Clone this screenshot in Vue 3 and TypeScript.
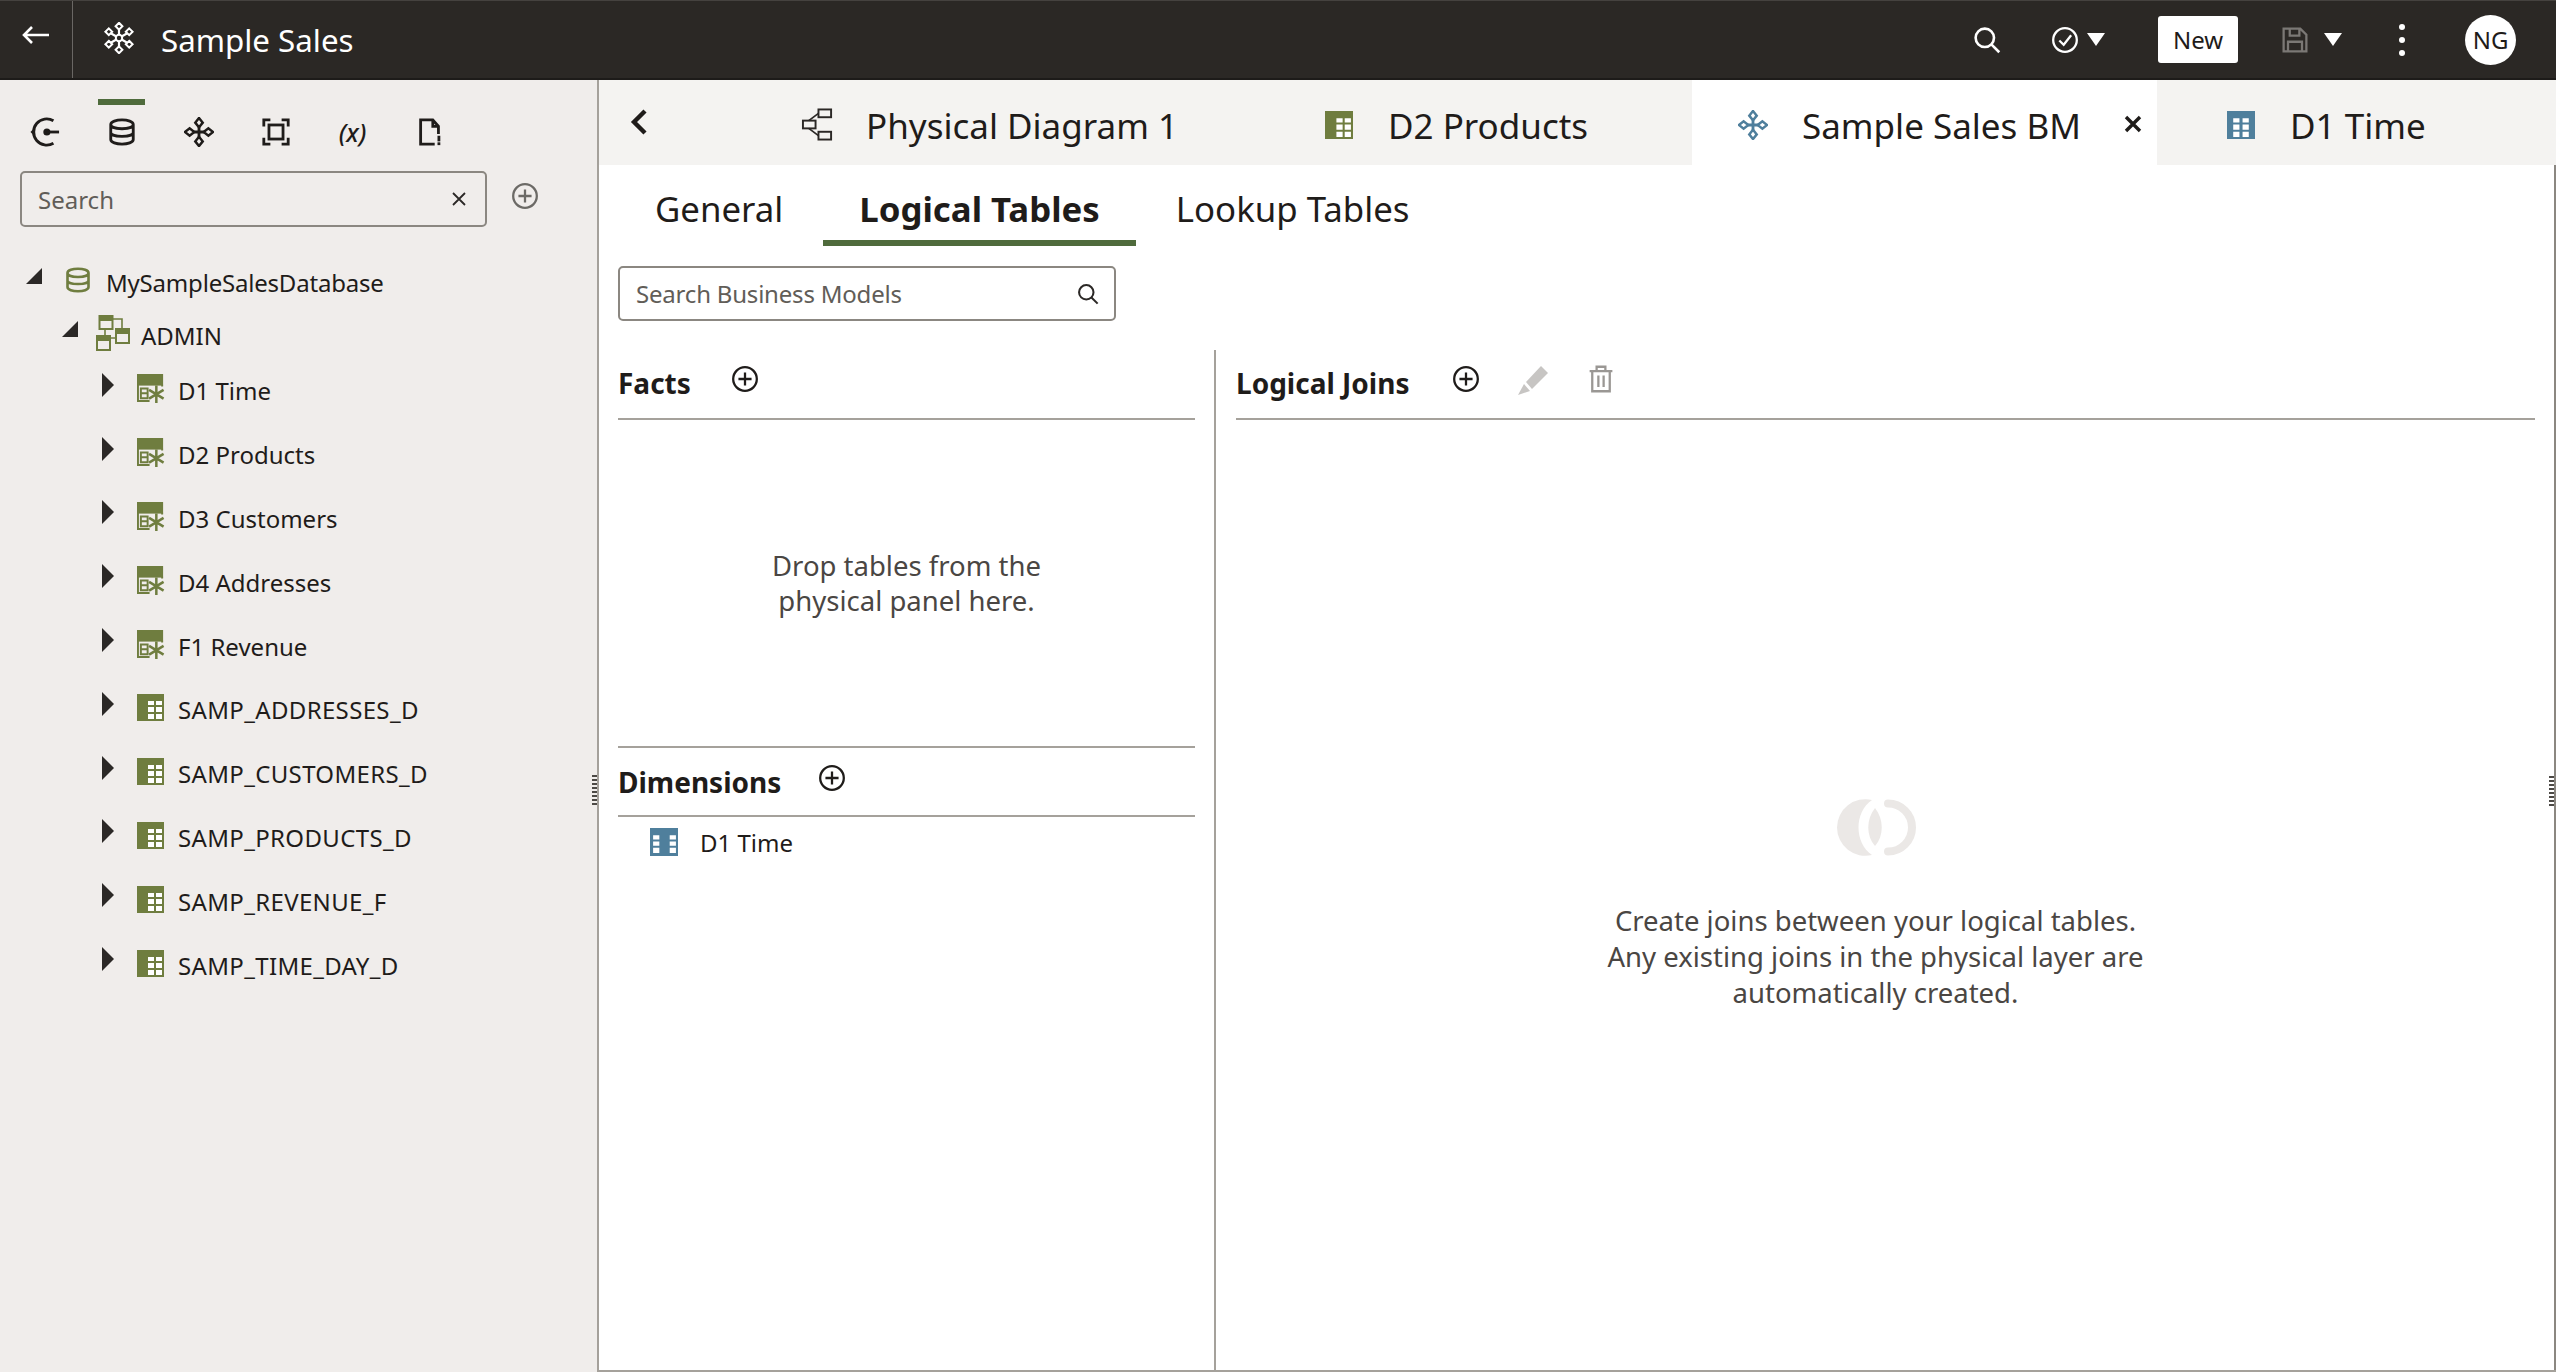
<script setup lang="ts">
interface TreeItem {
  label: string;
  icon: 'star-table' | 'grid-table';
}

interface WorkTab {
  label: string;
  icon: string;
  tone: string;
  active?: boolean;
}

const workTabs: WorkTab[] = [
  { label: 'Physical Diagram 1', icon: 'diagram', tone: 'ink' },
  { label: 'D2 Products', icon: 'grid-table', tone: 'olive' },
  { label: 'Sample Sales BM', icon: 'model', tone: 'blue', active: true },
  { label: 'D1 Time', icon: 'center-table', tone: 'blue' },
];

const railIcons = ['connect', 'database', 'model', 'focus', 'variable', 'file-alert'];

const treeItems: TreeItem[] = [
  { label: 'D1 Time', icon: 'star-table' },
  { label: 'D2 Products', icon: 'star-table' },
  { label: 'D3 Customers', icon: 'star-table' },
  { label: 'D4 Addresses', icon: 'star-table' },
  { label: 'F1 Revenue', icon: 'star-table' },
  { label: 'SAMP_ADDRESSES_D', icon: 'grid-table' },
  { label: 'SAMP_CUSTOMERS_D', icon: 'grid-table' },
  { label: 'SAMP_PRODUCTS_D', icon: 'grid-table' },
  { label: 'SAMP_REVENUE_F', icon: 'grid-table' },
  { label: 'SAMP_TIME_DAY_D', icon: 'grid-table' },
];

const subTabs = ['General', 'Logical Tables', 'Lookup Tables'];
</script>

<template>
  <div class="app">
    <svg class="sprite" aria-hidden="true">
      <symbol id="connect" viewBox="0 0 32 32">
        <path d="M25 4 A14 14 0 1 0 25 28" fill="none" stroke="currentColor" stroke-width="3" />
        <path d="M5.5 11 L0.5 16 L5.5 21 Z" fill="currentColor" />
        <circle cx="18" cy="16" r="3.8" fill="currentColor" />
        <rect x="18" y="14.5" width="13" height="3" fill="currentColor" />
      </symbol>
      <symbol id="database" viewBox="0 0 32 32">
        <path d="M4 8 C4 1.5 28 1.5 28 8 V24 C28 30.5 4 30.5 4 24 Z M4 8 C4 14 28 14 28 8 M4 16.5 C4 22 28 22 28 16.5" fill="none" stroke="currentColor" stroke-width="3" />
      </symbol>
      <symbol id="model" viewBox="0 0 32 32">
        <path d="M16 1 L20 6 L16 11 L12 6 Z M16 21 L20 26 L16 31 L12 26 Z M1 16 L6 12 L11 16 L6 20 Z M21 16 L26 12 L31 16 L26 20 Z" fill="none" stroke="currentColor" stroke-width="2.6" />
        <path d="M16 10 V22 M10 16 H22" stroke="currentColor" stroke-width="3" />
      </symbol>
      <symbol id="focus" viewBox="0 0 32 32">
        <path d="M10 3 H3 V10 M22 3 H29 V10 M10 29 H3 V22 M22 29 H29 V22" fill="none" stroke="currentColor" stroke-width="3" />
        <rect x="8.5" y="8.5" width="15" height="15" fill="none" stroke="currentColor" stroke-width="3" />
      </symbol>
      <symbol id="file-alert" viewBox="0 0 32 32">
        <path d="M21 29 H6 V3 H19 L25 10 V18 M19 3 V10 H25" fill="none" stroke="currentColor" stroke-width="3" />
        <rect x="24" y="20" width="3" height="6" fill="currentColor" />
        <rect x="24" y="27" width="3" height="3" fill="currentColor" />
      </symbol>
      <symbol id="plus-circle" viewBox="0 0 32 32">
        <circle cx="16" cy="16" r="13.5" fill="none" stroke="currentColor" stroke-width="2.6" />
        <path d="M16 8.5 V23.5 M8.5 16 H23.5" stroke="currentColor" stroke-width="2.6" />
      </symbol>
      <symbol id="search" viewBox="0 0 32 32">
        <circle cx="13.5" cy="13.5" r="10.5" fill="none" stroke="currentColor" stroke-width="3" />
        <path d="M21 21 L30 30" stroke="currentColor" stroke-width="3" />
      </symbol>
      <symbol id="snowflake" viewBox="0 0 32 32">
        <path d="M16 6 V26 M7.3 11 L24.7 21 M24.7 11 L7.3 21" stroke="currentColor" stroke-width="2.2" />
        <path d="M16 0.8 L19.4 4.2 L16 7.6 L12.6 4.2 Z M16 24.4 L19.4 27.8 L16 31.2 L12.6 27.8 Z M5.8 6.4 L9.2 9.8 L5.8 13.2 L2.4 9.8 Z M26.2 6.4 L29.6 9.8 L26.2 13.2 L22.8 9.8 Z M5.8 18.8 L9.2 22.2 L5.8 25.6 L2.4 22.2 Z M26.2 18.8 L29.6 22.2 L26.2 25.6 L22.8 22.2 Z" fill="#2b2825" stroke="currentColor" stroke-width="2" />
        <circle cx="16" cy="16" r="3.2" fill="#2b2825" stroke="currentColor" stroke-width="2" />
      </symbol>
      <symbol id="check-circle" viewBox="0 0 32 32">
        <circle cx="16" cy="16" r="13.5" fill="none" stroke="currentColor" stroke-width="2.6" />
        <path d="M9.5 16.5 L14.5 21.5 L23 10.5" fill="none" stroke="currentColor" stroke-width="2.6" />
      </symbol>
      <symbol id="save" viewBox="0 0 32 32">
        <path d="M3 3 H22 L29 10 V29 H3 Z M10 3 V11 H21 V3 M8 29 V18 H24 V29" fill="none" stroke="currentColor" stroke-width="2.6" />
      </symbol>
      <symbol id="diagram" viewBox="0 0 34 34">
        <rect x="18" y="1.5" width="13" height="8" fill="none" stroke="currentColor" stroke-width="2" />
        <rect x="2" y="13" width="13" height="8" fill="none" stroke="currentColor" stroke-width="2" />
        <rect x="18" y="24.5" width="13" height="8" fill="none" stroke="currentColor" stroke-width="2" />
        <path d="M8 13 L18 5.5 M8 21 L18 28.5" fill="none" stroke="currentColor" stroke-width="1.8" />
      </symbol>
      <symbol id="grid-table" viewBox="0 0 27 27">
        <rect width="27" height="27" fill="currentColor" />
        <path d="M11 7 H17 V11 H11 Z M19 7 H25 V11 H19 Z M11 13 H17 V18 H11 Z M19 13 H25 V18 H19 Z M11 20 H17 V25 H11 Z M19 20 H25 V25 H19 Z" fill="#fff" />
      </symbol>
      <symbol id="center-table" viewBox="0 0 27 27">
        <rect width="27" height="27" fill="currentColor" />
        <path d="M6 7 H12 V11 H6 Z M15 7 H21 V11 H15 Z M6 13 H12 V18 H6 Z M15 13 H21 V18 H15 Z M6 20 H12 V25 H6 Z M15 20 H21 V25 H15 Z" fill="#fff" />
      </symbol>
      <symbol id="film-table" viewBox="0 0 27 27">
        <rect width="27" height="27" fill="currentColor" />
        <path d="M3 7 H9 V11 H3 Z M19 7 H25 V11 H19 Z M3 13 H9 V17 H3 Z M19 13 H25 V17 H19 Z M3 19 H9 V24 H3 Z M19 19 H25 V24 H19 Z" fill="#fff" />
      </symbol>
      <symbol id="star-table" viewBox="0 0 30 30">
        <rect x="0" y="0" width="27" height="12" fill="currentColor" />
        <path d="M1 11 V28 H13 M26 11 V13" fill="none" stroke="currentColor" stroke-width="2" />
        <path d="M4 15 H11 V20 H4 Z M4 20 H11 V25 H4 Z" fill="none" stroke="currentColor" stroke-width="2" />
        <path d="M20 12 V30 M12.5 16.5 L27.5 25.5 M27.5 16.5 L12.5 25.5" stroke="currentColor" stroke-width="2.6" />
      </symbol>
      <symbol id="schema" viewBox="0 0 34 36">
        <rect x="3.5" y="1" width="13" height="13" fill="#f0edeb" stroke="currentColor" stroke-width="2" />
        <rect x="3.5" y="1" width="13" height="5" fill="currentColor" />
        <rect x="20" y="14" width="13" height="14" fill="#f0edeb" stroke="currentColor" stroke-width="2" />
        <rect x="20" y="14" width="13" height="5" fill="currentColor" />
        <rect x="1" y="21" width="13" height="14" fill="#f0edeb" stroke="currentColor" stroke-width="2" />
        <rect x="1" y="21" width="13" height="5" fill="currentColor" />
        <path d="M16 4 H26 V14 M14 23 H20 M9 14 V21" fill="none" stroke="currentColor" stroke-width="1.6" />
      </symbol>
      <symbol id="pencil" viewBox="0 0 32 32">
        <path d="M9 19 L24 3 L31 10 L15 26 Z" fill="currentColor" />
        <path d="M7 21 L13 28 L1 32 Z" fill="currentColor" />
      </symbol>
      <symbol id="trash" viewBox="0 0 32 32">
        <path d="M3 7 H29 M11 7 V2 H21 V7 M6 7 V30 H26 V7 M13 12 V25 M19 12 V25" fill="none" stroke="currentColor" stroke-width="2.6" />
      </symbol>
      <symbol id="joins" viewBox="0 0 80 57">
        <path d="M36 1 A28.3 28.3 0 1 0 36 56 C18 44 18 13 36 1 Z" fill="currentColor" />
        <path d="M39 9 C30 20 30 37 39 47 C48 37 48 20 39 9 Z" fill="currentColor" />
        <path d="M52 4.5 A24 24 0 0 1 52 52.5" fill="none" stroke="currentColor" stroke-width="8" stroke-linecap="round" />
      </symbol>
    </svg>

    <header class="topbar">
      <button class="back-btn" type="button" aria-label="Back">
        <svg width="30" height="22" viewBox="0 0 30 22"><path d="M28 11 H3 M11 3 L3 11 L11 19" fill="none" stroke="currentColor" stroke-width="2.6" /></svg>
      </button>
      <div class="brand">
        <svg class="icon-32"><use href="#snowflake" /></svg>
        <span>Sample Sales</span>
      </div>
      <div class="top-actions">
        <svg class="top-search"><use href="#search" /></svg>
        <svg class="top-check"><use href="#check-circle" /></svg>
        <span class="caret"></span>
        <button class="new-btn" type="button">New</button>
        <svg class="top-save"><use href="#save" /></svg>
        <span class="caret"></span>
        <span class="kebab"><i></i><i></i><i></i></span>
        <span class="avatar">NG</span>
      </div>
    </header>

    <div class="body">
      <aside class="sidebar">
        <div class="rail">
          <span v-for="(name, i) in railIcons" :key="name" class="rail-item" :class="{ selected: i === 1 }">
            <span v-if="name === 'variable'" class="rail-var">(x)</span>
            <svg v-else class="rail-icon"><use :href="`#${name}`" /></svg>
          </span>
        </div>
        <div class="side-search">
          <div class="side-input">
            <span>Search</span>
            <svg width="14" height="14" viewBox="0 0 14 14"><path d="M1 1 L13 13 M13 1 L1 13" stroke="#2b2826" stroke-width="1.8" /></svg>
          </div>
          <svg class="side-plus"><use href="#plus-circle" /></svg>
        </div>
        <ul class="tree">
          <li class="node node-root">
            <span class="tri tri-open"></span>
            <svg class="node-db"><use href="#database" /></svg>
            <span class="root-label">MySampleSalesDatabase</span>
          </li>
          <li class="node node-schema">
            <span class="tri tri-open"></span>
            <svg class="node-schema-icon"><use href="#schema" /></svg>
            <span>ADMIN</span>
          </li>
          <li v-for="item in treeItems" :key="item.label" class="node node-leaf">
            <span class="tri tri-closed"></span>
            <svg class="node-table" :class="item.icon"><use :href="`#${item.icon}`" /></svg>
            <span :class="{ 'caps-label': item.icon === 'grid-table' }">{{ item.label }}</span>
          </li>
        </ul>
        <span class="grip"></span>
      </aside>

      <main class="main">
        <nav class="work-tabs">
          <span class="chevron">
            <svg width="20" height="28" viewBox="0 0 20 28"><path d="M16 3 L5 14 L16 25" fill="none" stroke="currentColor" stroke-width="4.4" /></svg>
          </span>
          <div v-for="tab in workTabs" :key="tab.label" class="work-tab" :class="{ active: tab.active }">
            <svg class="tab-icon" :class="[tab.tone, tab.icon]"><use :href="`#${tab.icon}`" /></svg>
            <span>{{ tab.label }}</span>
            <svg v-if="tab.active" class="tab-close" viewBox="0 0 18 18"><path d="M2 2 L16 16 M16 2 L2 16" stroke="currentColor" stroke-width="3.4" /></svg>
          </div>
        </nav>

        <div class="content">
          <div class="sub-tabs">
            <span v-for="(name, i) in subTabs" :key="name" class="sub-tab" :class="{ current: i === 1 }">{{ name }}</span>
          </div>

          <div class="model-search">
            <span>Search Business Models</span>
            <svg class="model-search-icon"><use href="#search" /></svg>
          </div>

          <div class="columns">
            <section class="left-col">
              <div class="col-head">
                <h3>Facts</h3>
                <svg class="head-plus"><use href="#plus-circle" /></svg>
              </div>
              <div class="drop-zone">Drop tables from the<br />physical panel here.</div>
              <div class="col-head col-head-dim">
                <h3>Dimensions</h3>
                <svg class="head-plus"><use href="#plus-circle" /></svg>
              </div>
              <div class="dim-row">
                <svg class="dim-icon"><use href="#film-table" /></svg>
                <span>D1 Time</span>
              </div>
            </section>

            <section class="right-col">
              <div class="col-head col-head-joins">
                <h3>Logical Joins</h3>
                <svg class="head-plus"><use href="#plus-circle" /></svg>
                <svg class="head-tool pencil"><use href="#pencil" /></svg>
                <svg class="head-tool trash"><use href="#trash" /></svg>
              </div>
              <div class="joins-empty">
                <svg class="joins-icon"><use href="#joins" /></svg>
                <p>Create joins between your logical tables.<br />Any existing joins in the physical layer are<br />automatically created.</p>
              </div>
              <span class="grip grip-right"></span>
            </section>
          </div>
        </div>
      </main>
    </div>
  </div>
</template>

<style>
html,
body {
  margin: 0;
  padding: 0;
  background: #fff;
}
</style>

<style scoped>
.app {
  width: 2556px;
  height: 1372px;
  display: flex;
  flex-direction: column;
  overflow: hidden;
  font-family: "Noto Sans", "Open Sans", sans-serif;
  color: #1f1c1a;
  background: #fff;
}

.sprite {
  position: absolute;
  width: 0;
  height: 0;
}

.topbar {
  flex: 0 0 80px;
  box-sizing: border-box;
  display: flex;
  align-items: center;
  background: #2b2825;
  border-top: 1px solid #45423f;
  border-bottom: 2px solid #1d1b19;
  color: #fff;
}

.back-btn {
  width: 73px;
  height: 100%;
  padding: 0 0 6px;
  border: 0;
  border-right: 1px solid #6a6764;
  background: none;
  color: #fff;
}

.brand {
  display: flex;
  align-items: center;
  gap: 26px;
  padding-left: 30px;
  font-size: 31.3px;
}

.icon-32 {
  width: 32px;
  height: 32px;
  margin-top: -4px;
}

.top-actions {
  margin-left: auto;
  display: flex;
  align-items: center;
  padding-right: 40px;
  color: #fff;
}

.top-search {
  width: 28px;
  height: 30px;
  margin-right: 50px;
}

.top-check {
  width: 28px;
  height: 28px;
  margin-right: 8px;
}

.caret {
  width: 0;
  height: 0;
  border-left: 9px solid transparent;
  border-right: 9px solid transparent;
  border-top: 13px solid #fff;
}

.new-btn {
  width: 80px;
  height: 47px;
  margin: 0 43px 0 53px;
  padding: 0;
  border: 0;
  border-radius: 3px;
  background: #fff;
  color: #1f1c1a;
  font: 24px "Noto Sans", sans-serif;
}

.top-save {
  width: 28px;
  height: 28px;
  margin-right: 15px;
  color: #7b7875;
}

.kebab {
  display: flex;
  flex-direction: column;
  gap: 7px;
  margin: 0 60px 0 57px;
}

.kebab i {
  width: 6px;
  height: 6px;
  border-radius: 50%;
  background: #fff;
}

.avatar {
  width: 51px;
  height: 50px;
  border-radius: 50%;
  display: flex;
  align-items: center;
  justify-content: center;
  background: #fff;
  color: #1f1c1a;
  font-size: 24px;
}

.body {
  flex: 1;
  display: flex;
  min-height: 0;
}

.sidebar {
  position: relative;
  flex: 0 0 599px;
  box-sizing: border-box;
  background: #f0edeb;
  border-right: 2px solid #a5a19b;
}

.rail {
  display: flex;
  padding: 19px 0 0 6px;
}

.rail-item {
  width: 77px;
  height: 60px;
  box-sizing: border-box;
  display: flex;
  align-items: center;
  justify-content: center;
  padding-top: 6px;
}

.rail-item.selected {
  background: linear-gradient(#4f6b3c, #4f6b3c) center top / 47px 6px no-repeat;
}

.rail-icon {
  width: 30px;
  height: 30px;
}

.rail-var {
  font-size: 25px;
  font-style: italic;
  font-weight: 500;
}

.side-search {
  display: flex;
  align-items: center;
  margin: 12px 0 0 20px;
}

.side-input {
  width: 467px;
  height: 56px;
  box-sizing: border-box;
  display: flex;
  align-items: center;
  justify-content: space-between;
  padding: 0 19px 0 16px;
  border: 2px solid #8b8781;
  border-radius: 5px;
  color: #615d58;
  font-size: 24px;
}

.side-plus {
  width: 28px;
  height: 30px;
  margin: -7px 0 0 24px;
  color: #6c6a66;
}

.tree {
  list-style: none;
  margin: 0;
  padding: 28px 0 0;
  font-size: 24px;
}

.node {
  display: flex;
  align-items: center;
}

.node-root {
  height: 54px;
  padding-left: 26px;
}

.root-label {
  letter-spacing: -0.2px;
}

.node-schema {
  height: 50px;
  box-sizing: border-box;
  padding: 2px 0 0 62px;
}

.node-leaf {
  height: 63.8px;
  padding-left: 102px;
}

.caps-label {
  letter-spacing: 0.35px;
}

.tri {
  flex: none;
  margin-top: -12px;
}

.tri-open {
  width: 0;
  height: 0;
  border-left: 16px solid transparent;
  border-bottom: 16px solid #2b2826;
}

.tri-closed {
  width: 0;
  height: 0;
  border-top: 12px solid transparent;
  border-bottom: 12px solid transparent;
  border-left: 12px solid #2b2826;
}

.node-db {
  width: 28px;
  height: 30px;
  margin: -4px 14px 0 22px;
  color: #6f7d3f;
}

.node-schema-icon {
  width: 34px;
  height: 36px;
  margin: -4px 11px 0 18px;
  color: #6f7d3f;
}

.node-table {
  width: 29px;
  height: 29px;
  margin: -4px 12px 0 23px;
  color: #6f7d3f;
}

.node-table.grid-table {
  width: 27px;
  height: 27px;
  margin-right: 14px;
}

.grip {
  position: absolute;
  top: 695px;
  right: 0;
  width: 5px;
  height: 31px;
  background: repeating-linear-gradient(180deg, #4d4a46 0 2px, transparent 2px 4px);
}

.main {
  flex: 1;
  min-width: 0;
  display: flex;
  flex-direction: column;
  border-bottom: 2px solid #a5a19b;
}

.work-tabs {
  flex: 0 0 85px;
  display: grid;
  grid-template-columns: 132px 524px 437px 465px 399px;
  background: #f4f3f1;
  font-size: 35px;
  color: #1f1c1a;
}

.chevron {
  display: flex;
  align-items: center;
  padding: 0 0 2px 30px;
}

.work-tab {
  display: flex;
  align-items: center;
  padding: 5px 0 0 70px;
}

.work-tab.active {
  padding-left: 46px;
  background: #fff;
}

.tab-icon {
  flex: none;
  width: 30px;
  height: 30px;
  margin-right: 34px;
  margin-top: -1px;
}

.tab-icon.diagram {
  width: 33px;
  height: 33px;
  margin-right: 32px;
}

.tab-icon.grid-table,
.tab-icon.center-table {
  width: 28px;
  height: 28px;
  margin-right: 35px;
}

.tab-close {
  width: 18px;
  height: 18px;
  margin: -3px 0 0 43px;
}

.ink {
  color: #2b2826;
}

.olive {
  color: #6f7d3f;
}

.blue {
  color: #4f7f9c;
}

.content {
  flex: 1;
  min-height: 0;
  display: flex;
  flex-direction: column;
  border-right: 2px solid #8b8781;
}

.sub-tabs {
  display: flex;
  height: 81px;
  box-sizing: border-box;
  padding-left: 20px;
  font-size: 34.8px;
}

.sub-tab {
  display: flex;
  align-items: center;
  padding: 6px 36px 0;
  margin-right: 4px;
}

.sub-tab.current {
  font-weight: 700;
  border-bottom: 6px solid #4f6b3c;
  padding-top: 12px;
}

.model-search {
  width: 498px;
  height: 55px;
  box-sizing: border-box;
  display: flex;
  align-items: center;
  justify-content: space-between;
  margin: 20px 0 0 19px;
  padding: 0 15px 0 16px;
  border: 2px solid #8b8781;
  border-radius: 5px;
  color: #615d58;
  font-size: 24px;
  letter-spacing: -0.2px;
}

.model-search-icon {
  width: 22px;
  height: 24px;
  color: #2b2826;
}

.columns {
  flex: 1;
  min-height: 0;
  display: flex;
  margin-top: 29px;
  padding-left: 19px;
}

.left-col {
  width: 577px;
}

.right-col {
  position: relative;
  flex: 1;
  display: flex;
  flex-direction: column;
  margin-left: 19px;
  padding: 0 19px 0 20px;
  border-left: 2px solid #a5a19b;
}

.col-head {
  height: 70px;
  box-sizing: border-box;
  display: flex;
  align-items: center;
  padding-bottom: 3px;
  border-bottom: 2px solid #a5a19b;
}

.col-head h3 {
  margin: 0;
  font-size: 28px;
  font-weight: 700;
  color: #1f1c1a;
}

.head-plus {
  width: 28px;
  height: 30px;
  margin: -8px 0 0 40px;
}

.col-head-dim {
  height: 69px;
  padding-bottom: 0;
}

.col-head-dim .head-plus {
  margin-left: 37px;
}

.col-head-joins .head-plus {
  margin-left: 43px;
}

.head-tool {
  margin-top: -8px;
}

.pencil {
  width: 32px;
  height: 32px;
  margin-left: 37px;
  color: #c7c5c3;
}

.trash {
  width: 28px;
  height: 28px;
  margin-left: 38px;
  color: #9a9794;
}

.drop-zone {
  height: 328px;
  box-sizing: border-box;
  padding-top: 128px;
  border-bottom: 2px solid #a5a19b;
  text-align: center;
  font-size: 27.5px;
  line-height: 35px;
  color: #4a4643;
}

.dim-row {
  display: flex;
  align-items: center;
  gap: 22px;
  height: 50px;
  padding-left: 32px;
  font-size: 24px;
}

.dim-icon {
  width: 28px;
  height: 28px;
  color: #4f7f9c;
}

.joins-empty {
  flex: 1;
  display: flex;
  flex-direction: column;
  align-items: center;
  padding: 379px 20px 0 0;
  text-align: center;
  font-size: 27.5px;
  line-height: 36px;
  color: #4a4643;
}

.joins-empty p {
  margin: 47px 0 0;
}

.joins-icon {
  width: 80px;
  height: 57px;
  color: #ebe8e6;
}

.grip-right {
  top: 426px;
  right: 0;
}
</style>
